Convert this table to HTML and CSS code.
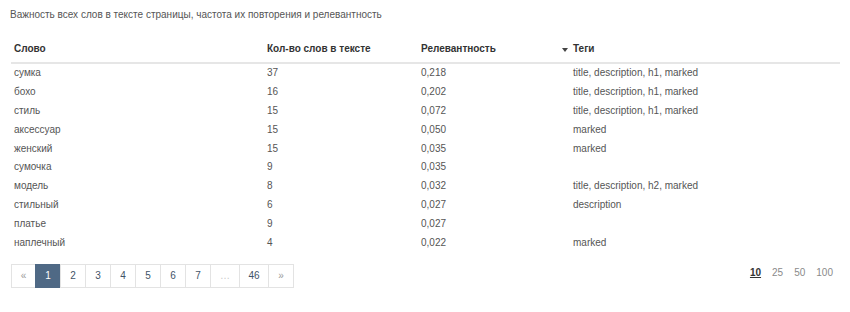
FILE: index.html
```html
<!DOCTYPE html>
<html lang="ru">
<head>
<meta charset="utf-8">
<link rel="stylesheet" href="styles.css">
</head>
<body>
<div class="wrap">
  <p class="caption">Важность всех слов в тексте страницы, частота их повторения и релевантность</p>
  <table class="words">
    <colgroup>
      <col class="c1"><col class="c2"><col class="c3"><col class="c4">
    </colgroup>
    <thead>
      <tr><th>Слово</th><th>Кол-во слов в тексте</th><th>Релевантность</th><th class="sorted"><span class="arrow"></span>Теги</th></tr>
    </thead>
    <tbody>
      <tr><td>сумка</td><td>37</td><td>0,218</td><td>title, description, h1, marked</td></tr>
      <tr><td>бохо</td><td>16</td><td>0,202</td><td>title, description, h1, marked</td></tr>
      <tr><td>стиль</td><td>15</td><td>0,072</td><td>title, description, h1, marked</td></tr>
      <tr><td>аксессуар</td><td>15</td><td>0,050</td><td>marked</td></tr>
      <tr><td>женский</td><td>15</td><td>0,035</td><td>marked</td></tr>
      <tr><td>сумочка</td><td>9</td><td>0,035</td><td></td></tr>
      <tr><td>модель</td><td>8</td><td>0,032</td><td>title, description, h2, marked</td></tr>
      <tr><td>стильный</td><td>6</td><td>0,027</td><td>description</td></tr>
      <tr><td>платье</td><td>9</td><td>0,027</td><td></td></tr>
      <tr><td>наплечный</td><td>4</td><td>0,022</td><td>marked</td></tr>
    </tbody>
  </table>
  <div class="footer">
    <ul class="pager">
      <li class="edge first">«</li>
      <li class="active">1</li>
      <li>2</li>
      <li>3</li>
      <li>4</li>
      <li>5</li>
      <li>6</li>
      <li>7</li>
      <li class="dots">…</li>
      <li class="wide">46</li>
      <li class="edge">»</li>
    </ul>
    <div class="sizes">
      <span class="cur">10</span><span>25</span><span>50</span><span>100</span>
    </div>
  </div>
</div>
</body>
</html>
```
FILE: styles.css
```css
html, body {
  margin: 0;
  padding: 0;
  background: #fff;
}
body {
  font-family: "Liberation Sans", Arial, sans-serif;
  font-size: 10px;
  color: #555;
}
.wrap {
  padding: 0 10px 0 11px;
  width: 829px;
}
.caption {
  margin: 0 0 0 -1px;
  padding-top: 8px;
  line-height: 14px;
  color: #555;
}
.words {
  width: 829px;
  border-collapse: collapse;
  table-layout: fixed;
  margin-top: 14px;
}
.c1 { width: 253px; }
.c2 { width: 154px; }
.c3 { width: 152px; }
.words th {
  text-align: left;
  font-weight: bold;
  color: #333;
  height: 26px;
  padding: 0 3px;
  line-height: 14px;
  vertical-align: middle;
  border-bottom: 2px solid #e6e6e6;
}
.words td {
  height: 18.8px;
  padding: 0 3px;
  line-height: 14px;
  vertical-align: middle;
  white-space: nowrap;
  color: #555;
}
.sorted {
  position: relative;
}
.arrow {
  position: absolute;
  left: -8px;
  top: 12px;
  width: 0;
  height: 0;
  border-left: 3px solid transparent;
  border-right: 3px solid transparent;
  border-top: 4px solid #444;
}
.footer {
  display: flex;
  justify-content: space-between;
  align-items: flex-start;
  margin-top: 12px;
}
.pager {
  display: flex;
  list-style: none;
  margin: 0;
  padding: 0;
}
.pager li {
  box-sizing: border-box;
  width: 26px;
  height: 24px;
  line-height: 22px;
  text-align: center;
  border: 1px solid #e3e3e3;
  margin-left: -1px;
  color: #3f5367;
}
.pager .first { margin-left: 0; width: 25px; }
.pager .wide { width: 30px; }
.pager .dots { width: 30px; color: #c8c8c8; }
.pager .edge { color: #9a9a9a; }
.pager .active {
  background: #4f6985;
  border-color: #4f6985;
  color: #fff;
}
.sizes {
  display: flex;
  gap: 11px;
  padding-top: 2px;
  padding-right: 7px;
  line-height: 14px;
  color: #8a8a8a;
}
.sizes .cur {
  color: #333;
  font-weight: bold;
  text-decoration: underline;
}
```
